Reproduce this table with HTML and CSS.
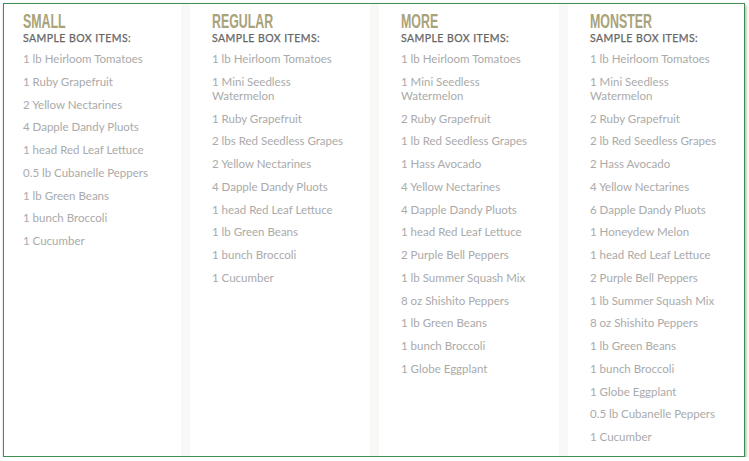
FILE: index.html
```html
<!DOCTYPE html>
<html>
<head>
<meta charset="utf-8">
<link rel="stylesheet" href="styles.css">
</head>
<body>
<div class="frame">
  <div class="grid">
    <section class="col first">
      <h2 class="title"><span>SMALL</span></h2>
      <h3 class="sub">SAMPLE BOX ITEMS:</h3>
      <ul class="items">
        <li>1 lb Heirloom Tomatoes</li>
        <li>1 Ruby Grapefruit</li>
        <li>2 Yellow Nectarines</li>
        <li>4 Dapple Dandy Pluots</li>
        <li>1 head Red Leaf Lettuce</li>
        <li>0.5 lb Cubanelle Peppers</li>
        <li>1 lb Green Beans</li>
        <li>1 bunch Broccoli</li>
        <li>1 Cucumber</li>
      </ul>
    </section>
    <section class="col">
      <h2 class="title"><span>REGULAR</span></h2>
      <h3 class="sub">SAMPLE BOX ITEMS:</h3>
      <ul class="items">
        <li>1 lb Heirloom Tomatoes</li>
        <li>1 Mini Seedless<br>Watermelon</li>
        <li>1 Ruby Grapefruit</li>
        <li>2 lbs Red Seedless Grapes</li>
        <li>2 Yellow Nectarines</li>
        <li>4 Dapple Dandy Pluots</li>
        <li>1 head Red Leaf Lettuce</li>
        <li>1 lb Green Beans</li>
        <li>1 bunch Broccoli</li>
        <li>1 Cucumber</li>
      </ul>
    </section>
    <section class="col">
      <h2 class="title"><span>MORE</span></h2>
      <h3 class="sub">SAMPLE BOX ITEMS:</h3>
      <ul class="items">
        <li>1 lb Heirloom Tomatoes</li>
        <li>1 Mini Seedless<br>Watermelon</li>
        <li>2 Ruby Grapefruit</li>
        <li>1 lb Red Seedless Grapes</li>
        <li>1 Hass Avocado</li>
        <li>4 Yellow Nectarines</li>
        <li>4 Dapple Dandy Pluots</li>
        <li>1 head Red Leaf Lettuce</li>
        <li>2 Purple Bell Peppers</li>
        <li>1 lb Summer Squash Mix</li>
        <li>8 oz Shishito Peppers</li>
        <li>1 lb Green Beans</li>
        <li>1 bunch Broccoli</li>
        <li>1 Globe Eggplant</li>
      </ul>
    </section>
    <section class="col">
      <h2 class="title"><span>MONSTER</span></h2>
      <h3 class="sub">SAMPLE BOX ITEMS:</h3>
      <ul class="items">
        <li>1 lb Heirloom Tomatoes</li>
        <li>1 Mini Seedless<br>Watermelon</li>
        <li>2 Ruby Grapefruit</li>
        <li>2 lb Red Seedless Grapes</li>
        <li>2 Hass Avocado</li>
        <li>4 Yellow Nectarines</li>
        <li>6 Dapple Dandy Pluots</li>
        <li>1 Honeydew Melon</li>
        <li>1 head Red Leaf Lettuce</li>
        <li>2 Purple Bell Peppers</li>
        <li>1 lb Summer Squash Mix</li>
        <li>8 oz Shishito Peppers</li>
        <li>1 lb Green Beans</li>
        <li>1 bunch Broccoli</li>
        <li>1 Globe Eggplant</li>
        <li>0.5 lb Cubanelle Peppers</li>
        <li>1 Cucumber</li>
      </ul>
    </section>
  </div>
</div>
</body>
</html>
```
FILE: styles.css
```css
html, body {
  margin: 0;
  padding: 0;
  background: #ffffff;
}
body {
  padding: 3px 0 0 3px;
  font-family: "Lato", "Open Sans", sans-serif;
}
.frame {
  width: 740px;
  height: 452px;
  border: 1px solid #3f8d52;
  box-shadow: 1px 2px 3px rgba(0, 0, 0, 0.35);
  background: #f8f8f6;
  overflow: hidden;
}
.grid {
  display: grid;
  grid-template-columns: 177px 180px 180px 1fr;
  column-gap: 9px;
  height: 100%;
}
.col {
  background: #ffffff;
  padding: 6px 0 0 22px;
}
.col.first {
  padding-left: 19px;
}
.title {
  margin: 0;
  font-family: "Liberation Sans", "Arial", sans-serif;
  font-weight: bold;
  font-size: 21px;
  line-height: 22px;
  color: #a9a37a;
  white-space: nowrap;
}
.title span {
  display: inline-block;
  transform: scaleX(0.59);
  transform-origin: left center;
}
.sub {
  margin: 0 0 8px 0;
  font-family: "Lato", sans-serif;
  font-weight: normal;
  font-size: 10.5px;
  line-height: 12px;
  letter-spacing: 0.45px;
  color: #666666;
  -webkit-text-stroke: 0.25px #666666;
}
.items {
  list-style: none;
  margin: 0;
  padding: 0;
  display: flex;
  flex-direction: column;
  gap: 8.75px;
}
.items li {
  font-size: 11.5px;
  line-height: 14px;
  color: #aaaaaa;
}
```
